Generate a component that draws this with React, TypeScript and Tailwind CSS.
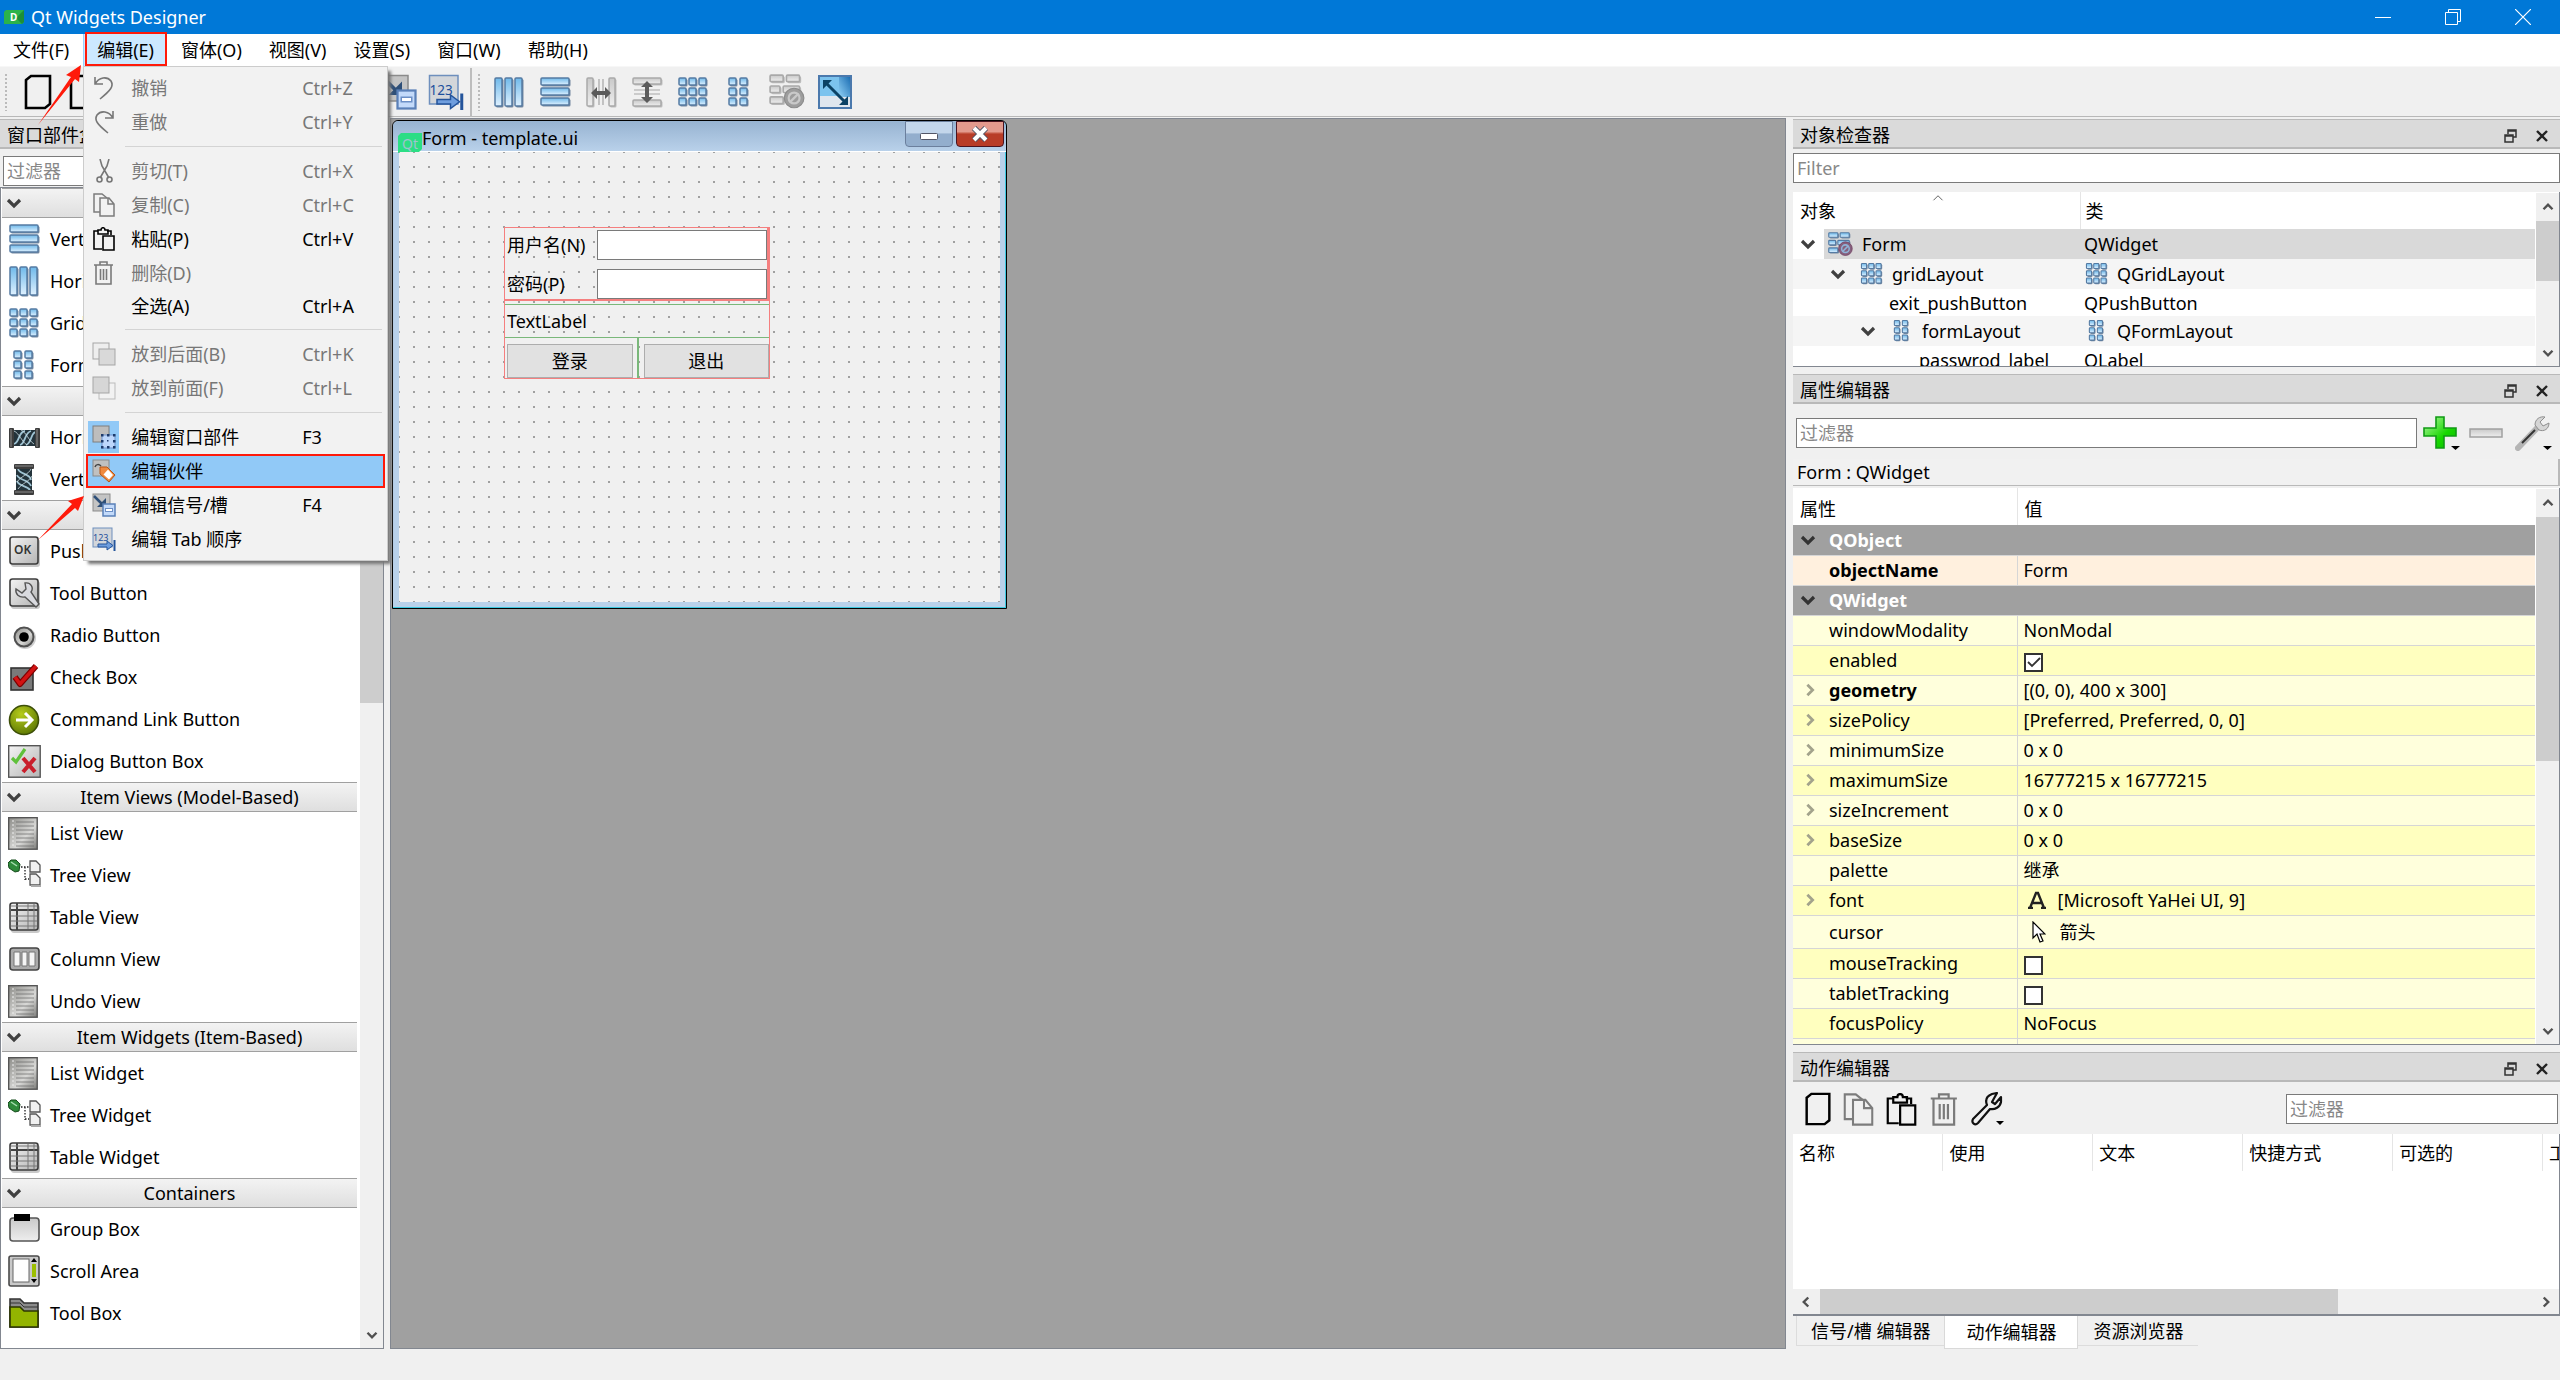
import React from "react";
import { clsx } from "clsx";

type IconProps = { className?: string };

/* ---------- icons ---------- */

const Gradients = () => (
  <svg className="absolute h-0 w-0" aria-hidden="true">
    <defs>
      <linearGradient id="blue" x1="0" y1="0" x2="0" y2="1">
        <stop offset="0" stopColor="#6fb9ea" />
        <stop offset="1" stopColor="#dff1ff" />
      </linearGradient>
      <linearGradient id="grey" x1="0" y1="0" x2="0" y2="1">
        <stop offset="0" stopColor="#c9c9c9" />
        <stop offset="1" stopColor="#eeeeee" />
      </linearGradient>
      <linearGradient id="panel" x1="0" y1="0" x2="1" y2="1">
        <stop offset="0" stopColor="#f4f4f4" />
        <stop offset="1" stopColor="#b4b4b4" />
      </linearGradient>
      <linearGradient id="steel" x1="0" y1="0" x2="1" y2="1">
        <stop offset="0" stopColor="#8d8d89" />
        <stop offset="0.6" stopColor="#d8d8d6" />
        <stop offset="1" stopColor="#7b7b78" />
      </linearGradient>
      <linearGradient id="green" x1="0" y1="0" x2="1" y2="1">
        <stop offset="0" stopColor="#b9f7a8" />
        <stop offset="0.6" stopColor="#17d800" />
        <stop offset="1" stopColor="#0bb800" />
      </linearGradient>
      <linearGradient id="corner" x1="0" y1="1" x2="1" y2="0">
        <stop offset="0" stopColor="#8fd0f5" />
        <stop offset="1" stopColor="#1d6fb4" />
      </linearGradient>
      <radialGradient id="lime" cx="0.4" cy="0.3" r="0.8">
        <stop offset="0" stopColor="#b6cc1c" />
        <stop offset="1" stopColor="#557000" />
      </radialGradient>
    </defs>
  </svg>
);

type BoxesProps = IconProps & { boxes: number[][]; muted?: boolean; children?: React.ReactNode };

const Boxes = ({ boxes, muted, className = "size-[33px]", children }: BoxesProps) => (
  <svg viewBox="0 0 33 33" className={className}>
    {boxes.map(([x, y, w, h]) => (
      <g key={`${x}-${y}`}>
        <rect x={x + 1} y={y + 1} width={w + 0.5} height={h + 0.5} rx="1.5" fill={muted ? "#bdbdbd" : "#75889f"} />
        <rect
          x={x}
          y={y}
          width={w}
          height={h}
          rx="1"
          fill={muted ? "url(#grey)" : "url(#blue)"}
          stroke={muted ? "#a9a9a9" : "#557ba3"}
          strokeWidth="1.5"
        />
      </g>
    ))}
    {children}
  </svg>
);

const cols = [[2, 2, 7, 28], [12, 2, 7, 28], [22, 2, 7, 28]];
const rows = [[2, 2, 28, 7], [2, 12, 28, 7], [2, 22, 28, 7]];
const nine = [2, 12, 22].flatMap((y) => [2, 12, 22].map((x) => [x, y, 7, 7]));
const six = [2, 12, 22].flatMap((y) => [6, 17].map((x) => [x, y, 7, 7]));

const HBoxIcon = (p: IconProps) => <Boxes boxes={cols} {...p} />;
const VBoxIcon = (p: IconProps) => <Boxes boxes={rows} {...p} />;
const GridIcon = (p: IconProps) => <Boxes boxes={nine} {...p} />;
const FormIcon = (p: IconProps) => <Boxes boxes={six} {...p} />;

const HSplitIcon = () => (
  <Boxes boxes={[[2, 2, 6, 28], [24, 2, 6, 28]]} muted>
    <path d="M14 3v26M18 3v26" stroke="#a5a5a5" strokeWidth="1.2" />
    <path d="M6 17l6-6v4h8v-4l6 6-6 6v-4h-8v4z" fill="#5b5b5b" />
  </Boxes>
);

const VSplitIcon = () => (
  <Boxes boxes={[[2, 2, 28, 6], [2, 24, 28, 6]]} muted>
    <path d="M3 14h26M3 18h26" stroke="#a5a5a5" strokeWidth="1.2" />
    <path d="M16 5l6 6h-4v10h4l-6 6-6-6h4V11h-4z" fill="#5b5b5b" />
  </Boxes>
);

const BreakIcon = ({ muted, className }: IconProps & { muted?: boolean }) => (
  <Boxes className={className} muted={muted} boxes={[[1, 1, 12, 6], [16, 1, 12, 6], [1, 11, 9, 6], [13, 11, 15, 6], [1, 21, 12, 6]]}>
    <circle cx="23" cy="22" r="9" fill={muted ? "#9d9d9d" : "#86607e"} stroke={muted ? "#8a8a8a" : "#70405f"} />
    <circle cx="23" cy="22" r="5" fill="none" stroke={muted ? "#c9c9c9" : "#8fb4d8"} strokeWidth="2" />
    <path d="M19 26l8-8" stroke={muted ? "#c9c9c9" : "#8fb4d8"} strokeWidth="2" />
  </Boxes>
);

const AdjustIcon = () => (
  <svg viewBox="0 0 34 34" className="size-[34px]">
    <rect x="1" y="1" width="32" height="32" fill="#dfe6ee" stroke="#4b79ad" strokeWidth="2" />
    <rect x="2" y="2" width="19" height="19" fill="#7cc3ee" />
    <path d="M21 2h11v20H21z" fill="url(#corner)" />
    <path d="M8 8l18 18" stroke="#0c4265" strokeWidth="3" />
    <path d="M5 5h9l-9 9zM30 30h-9l9-9z" fill="#0c4265" />
  </svg>
);

const SignalIcon = ({ className = "size-6" }: IconProps) => (
  <svg viewBox="0 0 24 24" className={className}>
    <rect x="1" y="1" width="17" height="17" fill="#c4c4c4" stroke="#8b8b8b" />
    <path d="M2 3l8 8" stroke="#2e4f78" strokeWidth="2.5" />
    <path d="M14 5v9H5z" fill="#2e4f78" />
    <rect x="11" y="11" width="12" height="12" fill="#c3dafa" stroke="#5a80b8" strokeWidth="1.5" />
    <rect x="13.500" y="15.500" width="7" height="3" fill="#fff" stroke="#6c8fc6" />
  </svg>
);

const TabOrderIcon = ({ className = "size-6" }: IconProps) => (
  <svg viewBox="0 0 24 24" className={className}>
    <rect x="1" y="1" width="19" height="19" fill="#d3d6da" stroke="#6e8fbd" />
    <text x="1" y="14" fontSize="9" fontFamily="Noto Sans" fill="#1d4f9c">123</text>
    <path d="M6 17h9v-3l6 4.500-6 4.500v-3H6z" fill="#6f9ede" stroke="#24549b" />
    <path d="M22.500 13v11" stroke="#24549b" strokeWidth="2" />
  </svg>
);

const EditWidgetsIcon = () => (
  <svg viewBox="0 0 24 24" className="size-6">
    <rect x="1" y="1" width="16" height="16" fill="#bdbdbd" stroke="#7f7f7f" />
    <rect x="10" y="10" width="13" height="13" fill="#bcd6fb" stroke="#6f92cc" />
    {[10, 16, 22].flatMap((x) => [10, 16, 22].map((y) => (
      <rect key={`${x}-${y}`} x={x - 1} y={y - 1} width={x === 16 && y === 16 ? 1.5 : 2.5} height={x === 16 && y === 16 ? 1.5 : 2.5} fill="#1d3a6b" />
    )))}
  </svg>
);

const BuddyIcon = () => (
  <svg viewBox="0 0 24 24" className="size-6">
    <rect x="1" y="1" width="16" height="16" fill="#c0c0c0" stroke="#8a8a8a" />
    <path d="M3 8c1-3 4-3 6-1" fill="none" stroke="#444" strokeWidth="1.500" />
    <path d="M8 8l7 0 8 8-6 7-9-8z" fill="#f08a3e" stroke="#b3561a" />
    <path d="M16 10.500l5 5.500-4 4.500-5.500-5z" fill="#fff" />
  </svg>
);

const StackIcon = ({ front }: { front?: boolean }) => (
  <svg viewBox="0 0 24 24" className="size-6">
    {front && <rect x="7" y="7" width="16" height="16" fill="#f2f2f2" stroke="#bbb" />}
    <rect x="1" y="1" width="16" height="16" fill={front ? "#d6d6d6" : "#eee"} stroke="#a5a5a5" />
    {!front && <rect x="7" y="7" width="16" height="16" fill="#d9d9d9" stroke="#a5a5a5" />}
  </svg>
);

const UndoIcon = ({ flip }: { flip?: boolean }) => (
  <svg viewBox="0 0 24 24" className={clsx("size-6", flip && "-scale-x-100")}>
    <path d="M3 1v7h8M3 8C7 1 15 0 19 5c3 5 0 9-11 18" fill="none" stroke="#777" strokeWidth="1.600" />
  </svg>
);

const CutIcon = () => (
  <svg viewBox="0 0 24 24" className="size-6" fill="none" stroke="#777" strokeWidth="1.600">
    <path d="M8 0l2 7 7 12M17 0l-2 7-7 12" />
    <circle cx="7.500" cy="20.500" r="2.500" />
    <circle cx="17.500" cy="20.500" r="2.500" />
  </svg>
);

const CopyIcon = ({ className = "size-6" }: IconProps) => (
  <svg viewBox="0 0 24 24" className={className} fill="none" stroke="#7c7c7c" strokeWidth="1.500">
    <path d="M8 19H2V1h8l5 4" />
    <path d="M8 5h9l5 6v12H8zM16 5v6h6" />
  </svg>
);

const PasteIcon = ({ className = "size-6" }: IconProps) => (
  <svg viewBox="0 0 24 24" className={className} fill="none" stroke="#000" strokeWidth="1.600">
    <path d="M10 22H2V4h4M15 4h4v4M6 7V3h3c0-3 4-3 4 0h3v4z" />
    <path d="M11 9h11v14H11z" />
  </svg>
);

const TrashIcon = ({ className = "size-6" }: IconProps) => (
  <svg viewBox="0 0 24 24" className={className} fill="none" stroke="#7a7a7a" strokeWidth="1.600">
    <path d="M2 4h19M4 4v19h15V4M8 4V1h7v3M8.500 8v11M11.500 8v11M14.500 8v11" />
  </svg>
);

const PageIcon = ({ className }: IconProps) => (
  <svg viewBox="0 0 28 36" className={className} fill="none" stroke="#000" strokeWidth="2.600">
    <path d="M2 6l5-4h19v28l-5 4H2z" />
  </svg>
);

const WrenchOutline = () => (
  <svg viewBox="0 0 34 34" className="size-[34px]">
    <path
      d="M21 2c-5 2-7 6-5 11L2 27c-2 4 2 7 5 4l12-14c5 1 10-2 11-7V5l-6 7-3-2 5-9z"
      fill="none"
      stroke="#111"
      strokeWidth="2.200"
      strokeLinejoin="round"
    />
    <path d="M25 29h8l-4 4z" />
  </svg>
);

const HSpacerIcon = ({ className = "" }: IconProps) => (
  <svg viewBox="0 0 33 33" className={clsx("size-[33px]", className)}>
    <rect x="4" y="9" width="25" height="16" fill="#23333b" />
    <path d="M6 23C12 21 10 11 17 10M12 24c6-2 4-12 11-14M18 24c6-2 4-10 9-13" stroke="#9fc3d3" strokeWidth="1.800" fill="none" />
    <path d="M6 10c5 2 8 11 13 14M13 9c5 2 8 11 13 14" stroke="#cfe0e6" strokeWidth="0.800" fill="none" />
    <rect x="1" y="7" width="5" height="20" rx="1" fill="#3d3d3d" />
    <rect x="27" y="7" width="5" height="20" rx="1" fill="#3d3d3d" />
    <path d="M3 8v18M29 8v18" stroke="#8d8d8d" />
  </svg>
);
const VSpacerIcon = () => <HSpacerIcon className="rotate-90" />;

const Plate = ({ children }: { children: React.ReactNode }) => (
  <svg viewBox="0 0 33 33" className="size-[33px]">
    <rect x="3" y="4" width="29" height="28" rx="3" fill="#c9c9c9" />
    <rect x="2" y="2" width="28" height="27" rx="2.500" fill="url(#panel)" stroke="#3d3d3d" strokeWidth="1.600" />
    {children}
  </svg>
);

const OkIcon = () => (
  <Plate>
    <text x="6" y="19" fontSize="12" fontWeight="600" fontFamily="Noto Sans" fill="#333">OK</text>
  </Plate>
);

const ToolIcon = () => (
  <Plate>
    <path d="M17 6c6-1 9 5 6 9l8 12-3 3-11-10c-6 1-10-3-9-8l6 4 4-4z" fill="#d9dadf" stroke="#555" strokeWidth="1.400" />
  </Plate>
);

const RadioIcon = () => (
  <svg viewBox="0 0 33 33" className="size-[33px]">
    <circle cx="17" cy="19" r="11" fill="#cfcfcf" />
    <circle cx="16" cy="18" r="9.500" fill="url(#steel)" stroke="#505050" strokeWidth="2" />
    <circle cx="16" cy="18" r="4.800" fill="#000" />
  </svg>
);

const CheckIcon = () => (
  <svg viewBox="0 0 33 33" className="size-[33px]">
    <rect x="3" y="7" width="22" height="22" fill="#7a7a7a" stroke="#333" strokeWidth="1.600" />
    <path d="M7 16l5 7L28 5" fill="none" stroke="#7d0000" strokeWidth="6" strokeLinejoin="round" />
    <path d="M7 16l5 7L28 5" fill="none" stroke="#d31313" strokeWidth="3.600" strokeLinejoin="round" />
  </svg>
);

const CommandIcon = () => (
  <svg viewBox="0 0 33 33" className="size-[33px]">
    <circle cx="16" cy="17" r="14.500" fill="url(#lime)" stroke="#3d4f08" strokeWidth="1.600" />
    <path d="M8 17h15M17 10l7 7-7 7" fill="none" stroke="#fff" strokeWidth="3" />
  </svg>
);

const DialogIcon = () => (
  <svg viewBox="0 0 33 33" className="size-[33px]">
    <rect x="0.700" y="0.700" width="31.500" height="31.500" fill="url(#panel)" stroke="#555" strokeWidth="1.400" />
    <path d="M4 13l4 4 9-13" fill="none" stroke="#5fc13b" strokeWidth="3.200" />
    <path d="M15 13l12 14M27 13L15 27" stroke="#c91f2c" strokeWidth="4" />
  </svg>
);

const ListIcon = () => (
  <svg viewBox="0 0 33 33" className="size-[33px]">
    <rect x="0.700" y="0.700" width="28.500" height="31.500" fill="url(#steel)" stroke="#555" strokeWidth="1.400" />
    <path d="M8 5h18M8 9h18M8 13h18M8 17h18M8 21h18M8 25h18M8 29h18" stroke="#666" strokeOpacity="0.700" />
    <path d="M5 3v27" stroke="#eee" strokeDasharray="2 2" />
  </svg>
);

const TreeIcon = () => (
  <svg viewBox="0 0 33 33" className="size-[33px]">
    <path d="M0 4l3-3h5l4 4-1 7-4 1-6-4z" fill="#2f8a3b" stroke="#174d1d" />
    <path d="M3 3l6 4" stroke="#a6dcae" strokeWidth="1.500" />
    <path d="M13 8h8M17 8v13M17 20h4" stroke="#222" strokeWidth="1.300" strokeDasharray="1.500 1.500" fill="none" />
    <path d="M22 2h6l4 4v7H22zM22 15h6l4 4v7H22z" fill="#f1f1f1" stroke="#555" strokeWidth="1.300" />
    <path d="M23 27h10" stroke="#aaa" strokeWidth="2" />
  </svg>
);

const TableIcon = () => (
  <Plate>
    <path d="M9 2v27M3 9h27" stroke="#444" strokeWidth="2" />
    <path d="M20 3v25M26 3v25M3 5h26M3 15h26M3 20h26M3 25h26" stroke="#777" />
  </Plate>
);

const ColumnIcon = () => (
  <svg viewBox="0 0 33 33" className="size-[33px]">
    <rect x="2" y="5" width="29" height="22" rx="3" fill="#aaa" stroke="#444" strokeWidth="1.600" />
    <path d="M6 9h6v14H6zM14 9h5v14h-5zM21 9h6v14h-6z" fill="#f5f5f5" stroke="#777" />
  </svg>
);

const GroupIcon = () => (
  <svg viewBox="0 0 33 33" className="size-[33px]">
    <rect x="2" y="5" width="29" height="23" rx="3" fill="url(#grey)" stroke="#555" strokeWidth="1.600" />
    <rect x="6" y="1" width="16" height="7" fill="#000" />
  </svg>
);

const ScrollIcon = () => (
  <svg viewBox="0 0 33 33" className="size-[33px]">
    <rect x="1" y="1" width="30" height="30" rx="2" fill="#c9c9c9" stroke="#4a4a4a" strokeWidth="1.600" />
    <rect x="5" y="4" width="16" height="23" fill="#fff" stroke="#666" />
    <rect x="24" y="9" width="4" height="13" fill="#9cbf00" />
    <path d="M23 7l3-4 3 4zM23 24l3 4 3-4z" />
  </svg>
);

const FolderIcon = () => (
  <svg viewBox="0 0 33 33" className="size-[33px]">
    <path d="M2 2h10l4 4h14v24H2z" fill="#8c8c8c" stroke="#333" strokeWidth="1.600" />
    <path d="M2 6h10l4 4h14" fill="none" stroke="#333" />
    <path d="M2 10h10l4 4h14v16H2z" fill="#93b400" stroke="#2c3600" strokeWidth="1.600" />
  </svg>
);

const Chevron = ({ className = "", size = "size-4", thick = 3.2 }: IconProps & { size?: string; thick?: number }) => (
  <svg viewBox="0 0 16 16" className={clsx("shrink-0", size, className)} fill="none" stroke="currentColor" strokeWidth={thick}>
    <path d="M2 5l6 6 6-6" />
  </svg>
);

/* ---------- shared pieces ---------- */

const DockTitle = ({ title }: { title: string }) => (
  <div className="flex h-[30px] shrink-0 items-center border-t border-b-2 border-[#b9b9b9] bg-[#dadada] pl-[7px] pr-3">
    <h2 className="flex-1 whitespace-nowrap pt-0.5">{title}</h2>
    <button aria-label="浮动" className="mr-[19px] pt-1">
      <svg viewBox="0 0 13 14" className="h-[14px] w-[13px]" fill="none" stroke="#333" strokeWidth="1.500">
        <path d="M4 5V1h8v7H9M4 2h8" />
        <path d="M1 6h8v7H1zM1 7h8" />
      </svg>
    </button>
    <button aria-label="关闭" className="pt-1">
      <svg viewBox="0 0 12 12" className="size-3" stroke="#222" strokeWidth="2.400">
        <path d="M1 1l10 10M11 1L1 11" />
      </svg>
    </button>
  </div>
);

const fieldClass = "h-[30px] border border-[#7a7a7a] bg-white px-[3px] outline-none placeholder:text-[#888]";

const ScrollBar = ({ thumb }: { thumb: string }) => (
  <div className="flex w-6 shrink-0 flex-col items-center border-t border-l border-white bg-[#f0f0f0] text-[#505050]">
    <Chevron className="my-[8px] rotate-180" size="size-3" />
    <div className={clsx("w-full bg-[#cdcdcd]", thumb)} />
    <Chevron className="mt-auto mb-[7px]" size="size-3" />
  </div>
);

/* ---------- left dock ---------- */

const widgetBox = [
  {
    name: "Layouts",
    items: [
      ["Vertical Layout", VBoxIcon],
      ["Horizontal Layout", HBoxIcon],
      ["Grid Layout", GridIcon],
      ["Form Layout", FormIcon],
    ],
  },
  { name: "Spacers", items: [["Horizontal Spacer", HSpacerIcon], ["Vertical Spacer", VSpacerIcon]] },
  {
    name: "Buttons",
    items: [
      ["Push Button", OkIcon],
      ["Tool Button", ToolIcon],
      ["Radio Button", RadioIcon],
      ["Check Box", CheckIcon],
      ["Command Link Button", CommandIcon],
      ["Dialog Button Box", DialogIcon],
    ],
  },
  {
    name: "Item Views (Model-Based)",
    items: [
      ["List View", ListIcon],
      ["Tree View", TreeIcon],
      ["Table View", TableIcon],
      ["Column View", ColumnIcon],
      ["Undo View", ListIcon],
    ],
  },
  {
    name: "Item Widgets (Item-Based)",
    items: [["List Widget", ListIcon], ["Tree Widget", TreeIcon], ["Table Widget", TableIcon]],
  },
  { name: "Containers", items: [["Group Box", GroupIcon], ["Scroll Area", ScrollIcon], ["Tool Box", FolderIcon]] },
] as { name: string; items: [string, React.ComponentType<IconProps>][] }[];

const WidgetBox = () => (
  <aside className="flex w-[384px] shrink-0 flex-col pt-0.5">
    <DockTitle title="窗口部件盒" />
    <input aria-label="过滤器" placeholder="过滤器" className={clsx(fieldClass, "mx-[3px] mt-[7px] mb-px shrink-0")} />
    <div className="flex min-h-0 flex-1 overflow-hidden border border-[#828790] bg-white">
      <div className="min-w-0 flex-1 overflow-hidden pr-0.5 pl-px">
        {widgetBox.map((group) => (
          <section key={group.name}>
            <button className="flex h-[30px] w-full items-center border-y border-[#a0a0a0] bg-linear-to-b from-[#f3f3f3] to-[#dfdfdf] pl-1 text-center">
              <Chevron className="text-[#404040]" />
              <span className="flex-1">{group.name}</span>
            </button>
            <ul>
              {group.items.map(([label, Icon]) => (
                <li key={label} className="flex h-[42px] items-center gap-[9px] pl-[6px]">
                  <Icon />
                  <span>{label}</span>
                </li>
              ))}
            </ul>
          </section>
        ))}
      </div>
      <ScrollBar thumb="h-[486px]" />
    </div>
  </aside>
);

/* ---------- menus ---------- */

type MenuEntry =
  | { kind: "sep" }
  | { kind?: "item"; label: string; keys?: string; icon?: React.ReactNode; off?: boolean; checked?: boolean; hot?: boolean };

const editMenu: MenuEntry[] = [
  { label: "撤销", keys: "Ctrl+Z", icon: <UndoIcon />, off: true },
  { label: "重做", keys: "Ctrl+Y", icon: <UndoIcon flip />, off: true },
  { kind: "sep" },
  { label: "剪切(T)", keys: "Ctrl+X", icon: <CutIcon />, off: true },
  { label: "复制(C)", keys: "Ctrl+C", icon: <CopyIcon />, off: true },
  { label: "粘贴(P)", keys: "Ctrl+V", icon: <PasteIcon /> },
  { label: "删除(D)", icon: <TrashIcon />, off: true },
  { label: "全选(A)", keys: "Ctrl+A" },
  { kind: "sep" },
  { label: "放到后面(B)", keys: "Ctrl+K", icon: <StackIcon />, off: true },
  { label: "放到前面(F)", keys: "Ctrl+L", icon: <StackIcon front />, off: true },
  { kind: "sep" },
  { label: "编辑窗口部件", keys: "F3", icon: <EditWidgetsIcon />, checked: true },
  { label: "编辑伙伴", icon: <BuddyIcon />, hot: true },
  { label: "编辑信号/槽", keys: "F4", icon: <SignalIcon /> },
  { label: "编辑 Tab 顺序", icon: <TabOrderIcon /> },
];

const EditMenu = () => (
  <div className="absolute top-full left-0 z-20 w-[305px] border border-[#ccc] bg-[#f2f2f2] py-1 shadow-[4px_4px_3px_-1px_#777]">
    {editMenu.map((entry, i) =>
      entry.kind === "sep" ? (
        <div key={i} className="flex h-[15px] items-center pr-[5px] pl-[41px]">
          <div className="h-px w-full bg-[#d4d4d4]" />
        </div>
      ) : (
        <button
          key={i}
          disabled={entry.off}
          className={clsx(
            "relative flex w-full items-center pl-1 text-left whitespace-nowrap",
            entry.icon ? "h-[34px]" : "h-8",
            entry.off && "text-[#777]",
          )}
        >
          {entry.hot && <span className="absolute inset-y-0 right-0.5 left-0.5 border-2 border-[#ff1a0a] bg-[#91c9f7]" />}
          <span className={clsx("relative flex h-8 w-[31px] items-center justify-center", entry.checked && "bg-[#91c9f7]")}>
            {entry.icon}
          </span>
          <span className="relative ml-3 w-[171px]">{entry.label}</span>
          <span className="relative">{entry.keys}</span>
        </button>
      ),
    )}
  </div>
);

const MenuBar = () => (
  <nav className="flex h-8 shrink-0 gap-px bg-white">
    {["文件(F)", "编辑(E)", "窗体(O)", "视图(V)", "设置(S)", "窗口(W)", "帮助(H)"].map((label, i) =>
      i === 1 ? (
        <div key={label} className="relative flex">
          <button className="border-l border-[#99d1ff] bg-[#cce8ff] px-[13px]">{label}</button>
          <span className="pointer-events-none absolute -top-0.5 right-0 bottom-0 left-0.5 z-30 border-2 border-[#ff1a0a]" />
          <EditMenu />
        </div>
      ) : (
        <button key={label} className="px-[13px]">
          {label}
        </button>
      ),
    )}
  </nav>
);

const Grip = () => <div className="h-[37px] w-0.5 shrink-0 bg-[repeating-linear-gradient(#bbb_0_2px,transparent_2px_4px)]" />;

const ToolBar = () => (
  <div className="flex h-[51px] shrink-0 items-center border-t border-b border-t-[#f7f7f7] border-b-[#b8b8b8] pt-px pl-[5px]">
    <div className="flex w-[376px] items-center gap-[17px]">
      <Grip />
      <button aria-label="新建"><PageIcon className="h-9 w-7" /></button>
      <button aria-label="打开"><PageIcon className="h-9 w-7" /></button>
    </div>
    <div className="flex items-center gap-[11px]">
      <button aria-label="编辑信号/槽"><SignalIcon className="size-9" /></button>
      <button aria-label="编辑 Tab 顺序"><TabOrderIcon className="size-9" /></button>
    </div>
    <div className="mr-[6px] ml-[6px] h-[49px] w-0.5 bg-[#bdbdbd]" />
    <Grip />
    <div className="ml-[13px] flex items-center gap-[13px]">
      <button aria-label="水平布局"><HBoxIcon /></button>
      <button aria-label="垂直布局"><VBoxIcon /></button>
      <button aria-label="水平分裂器布局"><HSplitIcon /></button>
      <button aria-label="垂直分裂器布局"><VSplitIcon /></button>
      <button aria-label="栅格布局"><GridIcon /></button>
      <button aria-label="表单布局"><FormIcon /></button>
      <button aria-label="打破布局"><BreakIcon muted className="size-9" /></button>
      <button aria-label="调整大小"><AdjustIcon /></button>
    </div>
  </div>
);

/* ---------- form window on the canvas ---------- */

const FormWindow = () => (
  <div className="absolute top-px left-px flex h-[489px] w-[615px] flex-col rounded-t-md border border-black bg-[#b9d1ea] shadow-[inset_-1px_-1px_0_#3cc8e0]">
    <div className="flex h-[31px] shrink-0 items-start rounded-t-md border-b border-white bg-linear-to-b from-[#97b3d1] to-[#b9d1ea] pr-[2px] pl-[5px]">
      <svg viewBox="0 0 24 20" className="mt-3 h-5 w-6">
        <path d="M3 0h21v16l-4 4H0V3z" fill="#2cde85" />
        <text x="4" y="16" fontSize="14" fontFamily="Noto Sans" fill="#9ec3cf">Qt</text>
      </svg>
      <span className="mt-[5px] flex-1">Form - template.ui</span>
      <button aria-label="最小化" className="flex h-[26px] w-12 items-center justify-center rounded-b-sm border border-[#6b7f9d] bg-linear-to-b from-[#c3d6eb] from-45% to-[#93aecd] to-50%">
        <svg viewBox="0 0 18 7" className="mt-1 h-[7px] w-[18px]">
          <rect x="0.500" y="0.500" width="17" height="6" rx="1" fill="#fff" stroke="#535666" />
        </svg>
      </button>
      <button aria-label="关闭窗体" className="ml-[3px] flex h-[26px] w-12 items-center justify-center rounded-b-sm border border-[#4a1420] bg-linear-to-b from-[#e39a8d] from-40% to-[#b83c27] to-50%">
        <svg viewBox="0 0 18 16" className="h-4 w-[18px]">
          <path d="M3 2l12 12M15 2L3 14" stroke="#535666" strokeWidth="6" />
          <path d="M3 2l12 12M15 2L3 14" stroke="#fff" strokeWidth="4" />
        </svg>
      </button>
    </div>
    <div className="relative mx-[6px] h-[450px] bg-[#f0f0f0] bg-[conic-gradient(from_270deg_at_2px_2px,#a0a0a0_90deg,transparent_0)] bg-[length:15px_15px] bg-[position:-1px_-1px]">
      <div className="absolute top-[75px] left-[105px] flex w-[266px] flex-col border border-[#f57f7f]">
        <div className="flex flex-col gap-[9px] border-r-2 border-b-2 border-[#f57f7f] pt-0.5 pl-0.5">
          <div className="flex items-center">
            <label htmlFor="user" className="w-[90px]">用户名(N)</label>
            <input id="user" className="h-[30px] w-full min-w-0 flex-1 border border-[#7a7a7a] bg-white px-1" />
          </div>
          <div className="flex items-center">
            <label htmlFor="password" className="w-[90px]">密码(P)</label>
            <input id="password" type="password" className="h-[30px] w-full min-w-0 flex-1 border border-[#7a7a7a] bg-white px-1" />
          </div>
        </div>
        <div className="mt-[3px] flex h-[34px] items-center border-y border-[#7ab87a] pl-0.5">TextLabel</div>
        <div className="flex">
          <div className="flex flex-1 border-r-2 border-[#7ab87a] pt-[6px] pr-1 pl-0.5">
            <button className="h-[34px] flex-1 border border-[#adadad] bg-[#e1e1e1]">登录</button>
          </div>
          <div className="flex flex-1 pt-[6px] pl-[5px]">
            <button className="h-[34px] flex-1 border border-[#adadad] bg-[#e1e1e1]">退出</button>
          </div>
        </div>
      </div>
    </div>
  </div>
);

/* ---------- right docks ---------- */

const ObjectInspector = () => (
  <section className="flex shrink-0 flex-col">
    <DockTitle title="对象检查器" />
    <input aria-label="Filter" placeholder="Filter" className={clsx(fieldClass, "mt-1")} />
    <div className="mt-[9px] flex h-[175px] overflow-hidden border-r border-b border-[#828790] bg-white">
      <table className="h-fit flex-1 table-fixed border-collapse text-left">
        <colgroup>
          <col className="w-[287px]" />
          <col />
        </colgroup>
        <thead>
          <tr className="h-[37px]">
            <th className="relative border-r border-[#e5e5e5] pl-[7px] font-normal">
              对象
              <Chevron className="absolute top-0 left-[139px] rotate-180 text-[#555]" size="size-3" thick={1.2} />
            </th>
            <th className="pl-[5px] font-normal">类</th>
          </tr>
        </thead>
        <tbody>
          <tr className="h-[30px]">
            <td className="p-0">
              <div className="flex h-[30px] items-center pl-[7px]">
                <Chevron className="mr-2 text-[#404040]" />
                <span className="flex h-full flex-1 items-center gap-[9px] bg-[#d9d9d9] pl-1">
                  <BreakIcon className="size-[25px]" />
                  Form
                </span>
              </div>
            </td>
            <td className="bg-[#d9d9d9] pl-1">QWidget</td>
          </tr>
          <tr className="h-[30px] bg-[#f5f5f5]">
            <td className="p-0">
              <div className="flex items-center pl-[37px]">
                <Chevron className="mr-[14px] text-[#404040]" />
                <GridIcon className="mr-2 size-6" />
                gridLayout
              </div>
            </td>
            <td className="p-0">
              <div className="flex items-center gap-2 pl-[5px]">
                <GridIcon className="size-6" />
                QGridLayout
              </div>
            </td>
          </tr>
          <tr className="h-[27px]">
            <td className="pl-[96px] leading-6">exit_pushButton</td>
            <td className="pl-1 leading-6">QPushButton</td>
          </tr>
          <tr className="h-[30px] bg-[#f5f5f5]">
            <td className="p-0">
              <div className="flex items-center pl-[67px]">
                <Chevron className="mr-[14px] text-[#404040]" />
                <FormIcon className="mr-2 size-6" />
                formLayout
              </div>
            </td>
            <td className="p-0">
              <div className="flex items-center gap-2 pl-[5px]">
                <FormIcon className="size-6" />
                QFormLayout
              </div>
            </td>
          </tr>
          <tr className="h-[27px]">
            <td className="pl-[126px] leading-6">passwrod_label</td>
            <td className="pl-1 leading-6">QLabel</td>
          </tr>
        </tbody>
      </table>
      <ScrollBar thumb="h-[60px]" />
    </div>
  </section>
);

const Tick = ({ label, on }: { label: string; on?: boolean }) => (
  <span className="relative flex size-[19px] pt-0.5">
    <input type="checkbox" aria-label={label} defaultChecked={on} className="size-[19px] shrink-0 appearance-none border-2 border-[#333] bg-white" />
    {on && (
      <svg viewBox="0 0 19 19" className="absolute top-0.5 left-0 size-[19px]" fill="none" stroke="#333" strokeWidth="1.800">
        <path d="M4 9l4 4 8-8" />
      </svg>
    )}
  </span>
);

type Prop = { name: string; value?: React.ReactNode; group?: boolean; bold?: boolean; more?: boolean; tall?: boolean };

const props: Prop[] = [
  { name: "QObject", group: true },
  { name: "objectName", value: "Form", bold: true },
  { name: "QWidget", group: true },
  { name: "windowModality", value: "NonModal" },
  { name: "enabled", value: <Tick label="enabled" on /> },
  { name: "geometry", value: "[(0, 0), 400 x 300]", bold: true, more: true },
  { name: "sizePolicy", value: "[Preferred, Preferred, 0, 0]", more: true },
  { name: "minimumSize", value: "0 x 0", more: true },
  { name: "maximumSize", value: "16777215 x 16777215", more: true },
  { name: "sizeIncrement", value: "0 x 0", more: true },
  { name: "baseSize", value: "0 x 0", more: true },
  { name: "palette", value: "继承" },
  {
    name: "font",
    more: true,
    value: (
      <span className="flex items-center gap-3 pl-1">
        <svg viewBox="0 0 18 18" className="size-[18px]" fill="none" stroke="#222" strokeWidth="2.400">
          <path d="M2 17L8 2h2l6 15M4 12h10M0 17h5M13 17h5" />
        </svg>
        [Microsoft YaHei UI, 9]
      </span>
    ),
  },
  {
    name: "cursor",
    tall: true,
    value: (
      <span className="flex items-center gap-[14px] pl-2">
        <svg viewBox="0 0 14 22" className="h-[22px] w-[14px]" fill="#fff" stroke="#000" strokeWidth="1.200">
          <path d="M1 1v16l4-4 3 8 3-1-3-7h5z" />
        </svg>
        箭头
      </span>
    ),
  },
  { name: "mouseTracking", value: <Tick label="mouseTracking" /> },
  { name: "tabletTracking", value: <Tick label="tabletTracking" /> },
  { name: "focusPolicy", value: "NoFocus" },
  { name: "", value: "" },
];

const rowColor = (p: Prop, i: number) => {
  if (p.group) return "bg-[#a0a0a0]";
  if (i === 1) return "bg-[#fff0de]";
  return i % 2 ? "bg-[#ffffdc]" : "bg-[#ffffbf]";
};

const PropertyEditor = () => (
  <section className="mt-[7px] flex min-h-0 flex-1 flex-col">
    <DockTitle title="属性编辑器" />
    <div className="flex h-[55px] shrink-0 items-center pt-0.5 pr-[12px] pl-[3px]">
      <input aria-label="属性过滤器" placeholder="过滤器" className={clsx(fieldClass, "mr-[6px] flex-1")} />
      <button aria-label="添加动态属性" className="mr-2">
        <svg viewBox="0 0 38 36" className="h-9 w-[38px]">
          <path d="M13 2h8v11h12v8H21v12h-8V21H1v-8h12z" fill="url(#green)" stroke="#109a14" strokeWidth="1.600" />
          <path d="M28 31h9l-4.500 4z" />
        </svg>
      </button>
      <button aria-label="删除动态属性" className="mr-3">
        <svg viewBox="0 0 34 10" className="h-[10px] w-[34px]">
          <rect x="1" y="1" width="32" height="8" fill="url(#grey)" stroke="#a0a0a0" strokeWidth="1.500" />
        </svg>
      </button>
      <button aria-label="配置属性编辑器">
        <svg viewBox="0 0 37 36" className="-mr-1 h-9 w-[37px]">
          <path d="M3 33L24 11" stroke="#b5b5b5" strokeWidth="6" strokeLinecap="round" />
          <path d="M7 28L20 15" stroke="#333" strokeWidth="2" />
          <path d="M20 10c0-6 5-9 10-8l-5 5 3 4 6-3c0 6-5 9-10 7z" fill="#d5d5d5" stroke="#8e8e8e" />
          <path d="M28 31h9l-4.500 4z" />
        </svg>
      </button>
    </div>
    <div className="flex h-[27px] shrink-0 items-center border-r-2 border-b border-[#b9b9b9] bg-[#f1f1f1] pl-1">Form : QWidget</div>
    <div className="mt-0.5 flex min-h-0 flex-1 overflow-hidden border-r border-b border-[#828790] bg-white">
      <table className="h-fit flex-1 table-fixed border-collapse text-left">
        <colgroup>
          <col className="w-[224px]" />
          <col />
        </colgroup>
        <thead>
          <tr className="h-[37px]">
            <th className="border-r border-[#e5e5e5] pt-1 pl-[7px] font-normal">属性</th>
            <th className="pt-1 pl-[7px] font-normal">值</th>
          </tr>
        </thead>
        <tbody>
          {props.map((p, i) => (
            <tr key={p.name} className={clsx("border-b border-[#d6d6d6]", p.tall ? "h-[33px]" : "h-[30px]", rowColor(p, i))}>
              {p.group ? (
                <th colSpan={2} className="p-0 font-bold text-white">
                  <div className="flex items-center pl-[7px]">
                    <Chevron className="mr-[13px] text-[#333]" />
                    {p.name}
                  </div>
                </th>
              ) : (
                <>
                  <td className="border-r border-[#d6d6d6] p-0">
                    <div className={clsx("flex items-center pl-9", p.bold && "font-bold")}>
                      {p.more && <Chevron className="mr-3 -ml-[26px] -rotate-90 text-[#a3a38c]" size="size-[14px]" />}
                      {p.name}
                    </div>
                  </td>
                  <td className="py-0 pl-[6px]">{p.value}</td>
                </>
              )}
            </tr>
          ))}
        </tbody>
      </table>
      <ScrollBar thumb="h-[244px]" />
    </div>
  </section>
);

const ActionEditor = () => (
  <section className="mt-[7px] flex shrink-0 flex-col">
    <DockTitle title="动作编辑器" />
    <div className="flex h-[52px] items-center pt-0.5 pr-0.5 pl-[11px]">
      <div className="flex flex-1 items-center gap-[10px]">
        <button aria-label="新建动作"><PageIcon className="h-[34px] w-[28px]" /></button>
        <button aria-label="复制"><CopyIcon className="size-[33px]" /></button>
        <button aria-label="粘贴"><PasteIcon className="size-[33px]" /></button>
        <button aria-label="删除"><TrashIcon className="size-[33px]" /></button>
        <button aria-label="配置"><WrenchOutline /></button>
      </div>
      <input aria-label="动作过滤器" placeholder="过滤器" className={clsx(fieldClass, "w-[272px]")} />
    </div>
    <div className="flex h-[182px] flex-col overflow-hidden border-r border-b-2 border-[#828790] bg-white">
      <table className="w-[900px] table-fixed border-collapse text-left">
        <thead>
          <tr className="h-[37px]">
            {["名称", "使用", "文本", "快捷方式", "可选的", "工具提示"].map((h) => (
              <th key={h} className="border-r border-[#e5e5e5] pl-[6px] font-normal">
                {h}
              </th>
            ))}
          </tr>
        </thead>
      </table>
      <div className="mt-auto flex h-[25px] items-center bg-[#f0f0f0] px-[7px] text-[#505050]">
        <Chevron className="mr-2 rotate-90" size="size-3" />
        <div className="flex h-full flex-1">
          <div className="h-full w-[72%] bg-[#cdcdcd]" />
        </div>
        <Chevron className="-rotate-90" size="size-3" />
      </div>
    </div>
    <div className="flex h-[33px] items-start pl-[3px]">
      <button className="h-[30px] border-b border-l border-[#dcdcdc] px-[14px]">信号/槽 编辑器</button>
      <button className="h-[33px] border-x border-b border-[#d9d9d9] bg-white px-[21px]">动作编辑器</button>
      <button className="h-[30px] border-b border-[#dcdcdc] px-[15px]">资源浏览器</button>
    </div>
  </section>
);

export default function App() {
  return (
    <div className="relative flex h-screen flex-col overflow-hidden bg-[#f0f0f0] font-['Noto_Sans','Noto_Sans_CJK_SC',sans-serif] text-[18px] leading-6 text-black">
      <Gradients />
      <header className="flex h-[34px] shrink-0 items-center bg-[#0078d7] pl-1 text-white">
        <svg viewBox="0 0 20 14" className="mr-[7px] h-[14px] w-5">
          <path d="M2 0h18v12l-2 2H0V2z" fill="#2bb34b" />
          <path d="M20 0v12l-2 2-6-6z" fill="#1d8f38" />
          <text x="6" y="11" fontSize="10" fontWeight="700" fontFamily="Noto Sans" fill="#fff">D</text>
        </svg>
        <h1 className="flex-1">Qt Widgets Designer</h1>
        <div className="flex items-center gap-[54px] pr-[29px]">
          <button aria-label="最小化主窗口"><svg viewBox="0 0 16 16" className="size-4" stroke="#fff"><path d="M0 8.500h16" /></svg></button>
          <button aria-label="还原主窗口"><svg viewBox="0 0 16 16" className="size-4" fill="none" stroke="#fff"><path d="M0.500 3.500h12v12h-12zM3.500 3V0.500h12v12H13" /></svg></button>
          <button aria-label="关闭主窗口"><svg viewBox="0 0 16 16" className="size-4" stroke="#fff" strokeWidth="1.200"><path d="M0 0l16 16M16 0L0 16" /></svg></button>
        </div>
      </header>
      <MenuBar />
      <ToolBar />
      <div className="flex min-h-0 flex-1">
        <WidgetBox />
        <main className="relative mt-px ml-[6px] min-w-0 flex-1 overflow-hidden border border-[#828790] bg-[#a0a0a0]">
          <FormWindow />
        </main>
        <aside className="ml-[7px] flex w-[767px] shrink-0 flex-col pt-0.5">
          <ObjectInspector />
          <PropertyEditor />
          <ActionEditor />
        </aside>
      </div>
      <footer className="h-[31px] shrink-0" />

      {/* callout arrows */}
      <svg viewBox="0 0 46 60" className="pointer-events-none absolute top-[65px] left-[38px] z-30 h-[60px] w-[46px]">
        <path d="M0 60L33 12l-5-2L43 0l-2 17-4-3z" fill="#ff1a0a" />
      </svg>
      <svg viewBox="0 0 46 44" className="pointer-events-none absolute top-[496px] left-[38px] z-30 h-[44px] w-[46px]">
        <path d="M0 44L34 8l-4-3L46 0l-6 15-3-3z" fill="#ff1a0a" />
      </svg>
    </div>
  );
}
